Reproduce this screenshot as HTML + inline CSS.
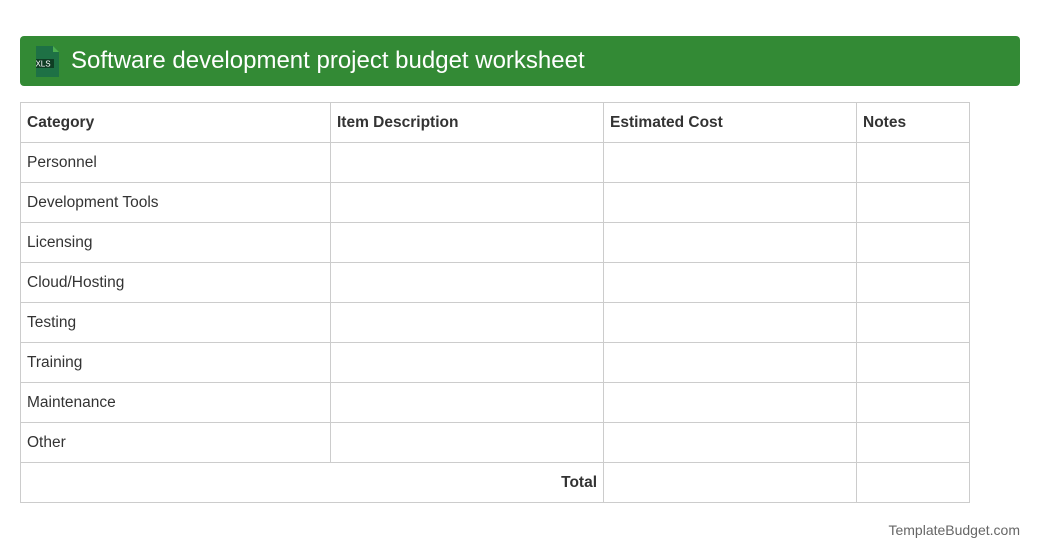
<!DOCTYPE html>
<html><head><style>
body{margin:0;width:1040px;height:560px;background:#fff;font-family:"Liberation Sans",sans-serif;position:relative;}
.hdr{position:absolute;left:20px;top:36px;width:1000px;height:50px;background:#338a35;border-radius:4px;}
.hdr .t{position:absolute;left:51px;top:11px;color:#fff;font-size:24px;}
.ic{position:absolute;left:16px;top:10px;}
table{position:absolute;left:20px;top:102px;border-collapse:collapse;font-size:15.5px;color:#333;table-layout:fixed;width:949px;}
td,th{border:1px solid #ccc;height:40px;padding:0 6px;box-sizing:border-box;text-align:left;}
th{font-weight:bold;color:#333;}
.f{position:absolute;right:20px;top:522px;font-size:14px;color:#666;}
</style></head><body>
<div class="hdr">
<svg class="ic" width="24" height="31" viewBox="0 0 24 31"><path d="M0 0h17l6 6v25H0z" fill="#1e7145"/><path d="M17 0v6h6z" fill="#4caf50"/><rect x="-4" y="13" width="22" height="9" fill="#0f3d24"/><text x="7" y="20.5" font-size="8" fill="#fff" text-anchor="middle" font-family="Liberation Sans">XLS</text></svg>
<div class="t">Software development project budget worksheet</div>
</div>
<table>
<colgroup><col style="width:310px"><col style="width:273px"><col style="width:253px"><col style="width:113px"></colgroup>
<tr><th>Category</th><th>Item Description</th><th>Estimated Cost</th><th>Notes</th></tr>
<tr><td>Personnel</td><td></td><td></td><td></td></tr>
<tr><td>Development Tools</td><td></td><td></td><td></td></tr>
<tr><td>Licensing</td><td></td><td></td><td></td></tr>
<tr><td>Cloud/Hosting</td><td></td><td></td><td></td></tr>
<tr><td>Testing</td><td></td><td></td><td></td></tr>
<tr><td>Training</td><td></td><td></td><td></td></tr>
<tr><td>Maintenance</td><td></td><td></td><td></td></tr>
<tr><td>Other</td><td></td><td></td><td></td></tr>
<tr><td colspan="2" style="text-align:right;font-weight:bold">Total</td><td></td><td></td></tr>
</table>
<div class="f">TemplateBudget.com</div>
</body></html>
